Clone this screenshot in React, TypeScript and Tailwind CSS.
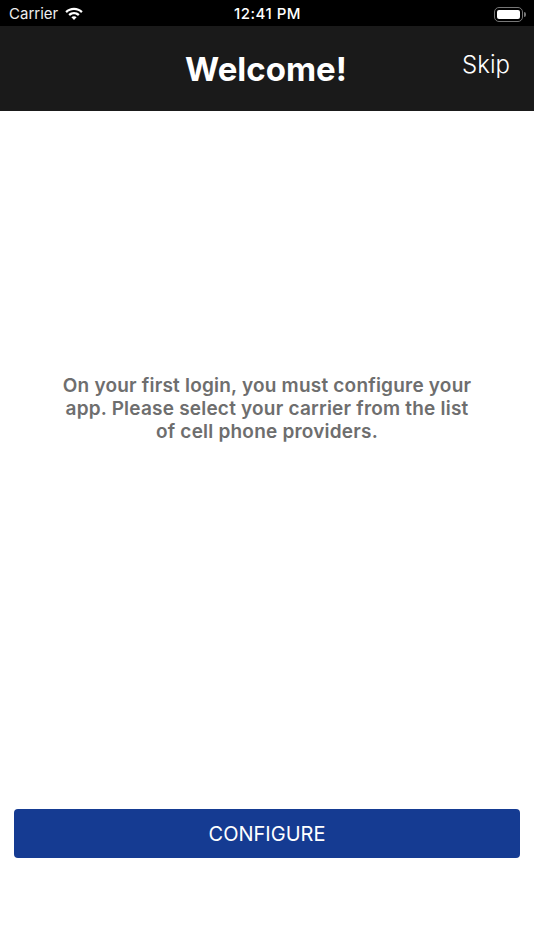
const WifiIcon = () => (
  <svg width="20" height="15" viewBox="0 0 20 15" fill="#fff">
    <path d="M10 3.1c2.7 0 5.2 1 7.1 2.8l1.6-1.7C16.3 2 13.3.7 10 .7S3.700 2 1.300 4.200l1.600 1.700C4.800 4.100 7.300 3.100 10 3.100z" />
    <path d="M10 7.300c1.500 0 2.900.6 4 1.600l1.600-1.700C14.100 5.800 12.100 5 10 5s-4.100.8-5.600 2.200L6 8.900c1.100-1 2.500-1.600 4-1.600z" />
    <path d="M10 9.300c-1 0-1.900.4-2.600 1L10 13l2.600-2.700c-.7-.6-1.600-1-2.600-1z" />
  </svg>
);

const BatteryIcon = () => (
  <div className="flex items-center">
    <div className="h-[15px] w-[29px] rounded-[5px] border border-[#777] p-[2px]">
      <div className="h-full w-full rounded-[2px] bg-white" />
    </div>
    <div className="ml-px h-[5px] w-[2px] rounded-r-sm bg-[#777]" />
  </div>
);

const App = () => {
  return (
    <div className="flex h-[950px] w-full flex-col bg-white font-['Inter',sans-serif]">
      <div className="flex h-[26px] items-center justify-between bg-black pl-[9px] pr-[8px] pt-[2px] text-white">
        <div className="flex w-[150px] items-center gap-[6px]">
          <span className="text-[15px] text-[#eee]">Carrier</span>
          <WifiIcon />
        </div>
        <span className="text-[15px] font-medium tracking-[0.5px]">12:41 PM</span>
        <div className="flex w-[150px] justify-end">
          <BatteryIcon />
        </div>
      </div>

      <div className="relative flex h-[85px] items-center justify-center bg-[#1a1a1a] pt-[2px] text-white">
        <h1 className="mr-[2px] text-[33px] font-bold">Welcome!</h1>
        <button className="absolute right-[24px] top-[21px] text-[24px] font-light">Skip</button>
      </div>

      <div className="flex flex-1 flex-col px-[14px]">
        <div className="flex flex-1 items-start justify-center pt-[263px]">
          <p className="w-[416px] shrink-0 text-center text-[19px] leading-[23px] font-semibold tracking-[0.21px] text-[#6e6e6e]">
            On your first login, you must configure your app. Please select your carrier from the list of cell phone providers.
          </p>
        </div>
        <button className="mb-[92px] h-[49px] w-full rounded-[4px] bg-[#153b92] text-[20px] text-white">
          CONFIGURE
        </button>
      </div>
    </div>
  );
};

export default App;
